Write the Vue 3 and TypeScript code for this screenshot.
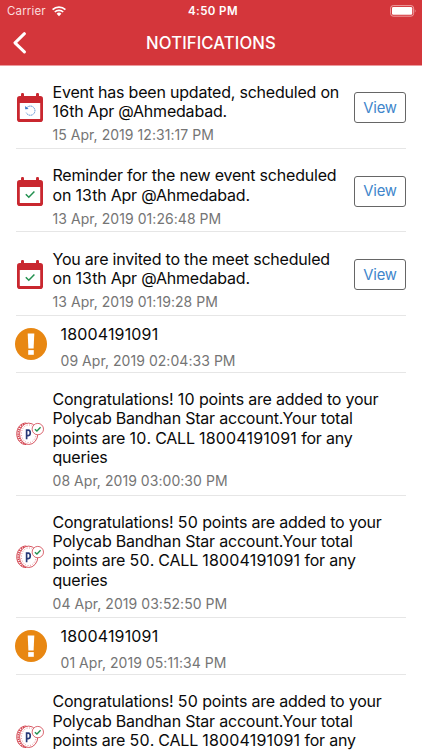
<script setup lang="ts">
type Kind = 'updated' | 'invite' | 'alert' | 'points'

interface Notice {
  kind: Kind
  lines: string[]
  date?: string
}

const pointsLines = (points: number): string[] => [
  `Congratulations! ${points} points are added to your`,
  'Polycab Bandhan Star account.Your total',
  `points are ${points}. CALL 18004191091 for any`,
  'queries',
]

const notices: Notice[] = [
  { kind: 'updated', lines: ['Event has been updated, scheduled on', '16th Apr @Ahmedabad.'], date: '15 Apr, 2019 12:31:17 PM' },
  { kind: 'invite', lines: ['Reminder for the new event scheduled', 'on 13th Apr @Ahmedabad.'], date: '13 Apr, 2019 01:26:48 PM' },
  { kind: 'invite', lines: ['You are invited to the meet scheduled', 'on 13th Apr @Ahmedabad.'], date: '13 Apr, 2019 01:19:28 PM' },
  { kind: 'alert', lines: ['18004191091'], date: '09 Apr, 2019 02:04:33 PM' },
  { kind: 'points', lines: pointsLines(10), date: '08 Apr, 2019 03:00:30 PM' },
  { kind: 'points', lines: pointsLines(50), date: '04 Apr, 2019 03:52:50 PM' },
  { kind: 'alert', lines: ['18004191091'], date: '01 Apr, 2019 05:11:34 PM' },
  { kind: 'points', lines: pointsLines(50).slice(0, 3) },
]

const isEvent = (kind: Kind): boolean => kind === 'updated' || kind === 'invite'

// Numbers are tracked wider than words, so each line is split around them.
const segments = (line: string): string[] => line.split(/(\d+)/).filter((part) => part !== '')
const isNumber = (part: string): boolean => /^\d+$/.test(part)
</script>

<template>
  <div class="screen">
    <header class="top">
      <div class="status">
        <div class="carrier">
          <span>Carrier</span>
          <svg class="wifi" viewBox="0 0 14 11">
            <path d="M0.6 3.7 A9.2 9.2 0 0 1 13.4 3.7" />
            <path d="M2.8 6 A6 6 0 0 1 11.2 6" />
            <path class="solid" d="M7 10.2 L4.6 7.8 A3.4 3.4 0 0 1 9.4 7.8 Z" />
          </svg>
        </div>
        <span class="clock">4:50 PM</span>
        <svg class="battery" viewBox="0 0 27 12">
          <rect x="0.6" y="0.6" width="23" height="10.6" rx="2.6" fill="none" stroke="#f0a9ac" stroke-width="0.9" />
          <rect x="2" y="2" width="20.2" height="7.8" rx="1.3" fill="#fff" />
          <path d="M24.8 4 Q26.4 5.9 24.8 7.8 Z" fill="#f0a9ac" />
        </svg>
      </div>
      <div class="nav">
        <svg class="back" viewBox="0 0 14 22"><path d="M11.4 1.7 L2 10.8 L11.4 19.9" /></svg>
        <h1>NOTIFICATIONS</h1>
      </div>
    </header>

    <main class="list">
      <article v-for="(notice, i) in notices" :key="i" class="row" :class="notice.kind">
        <div class="icon">
          <svg v-if="isEvent(notice.kind)" class="calendar" viewBox="0 0 26 29">
            <rect x="0" y="3" width="26" height="26" rx="2.8" fill="#c9272f" />
            <rect x="4" y="0" width="3" height="6" rx="1.2" fill="#c9272f" />
            <rect x="19" y="0" width="3" height="6" rx="1.2" fill="#c9272f" />
            <rect x="2.8" y="10" width="20.4" height="16" rx="0.6" fill="#fff" />
            <g v-if="notice.kind === 'updated'">
              <path d="M9.8 14.7 A4.6 4.6 0 1 1 9.2 19.7" fill="none" stroke="#5b92d2" stroke-width="1" stroke-dasharray="1.5 0.5" />
              <path d="M8.2 12.9 L8.2 16.2 L11.6 16 Z" fill="#3475c3" />
            </g>
            <path v-else d="M8.8 17.3 L11.8 20.3 L17.4 14.5" fill="none" stroke="#239150" stroke-width="1.5" />
          </svg>

          <svg v-else-if="notice.kind === 'alert'" class="warning" viewBox="0 0 32 32">
            <circle cx="16" cy="16" r="16" fill="#e88712" />
            <path d="M12.7 5.5 H19.3 L18.6 20.4 H13.4 Z" fill="#fff" />
            <rect x="13.2" y="22.1" width="5.6" height="4.7" fill="#fff" />
          </svg>

          <svg v-else class="coin" viewBox="0 0 29 24">
            <path d="M10.5 1 C4.5 1 0.8 6 0.8 12 S4.5 23 10.5 23" fill="none" stroke="#d2414d" stroke-width="1" />
            <path d="M10.5 2.2 C5.2 2.2 2.3 7 2.3 12 S5.2 21.8 10.5 21.8" fill="none" stroke="#d2414d" stroke-width="1.8" stroke-dasharray="1.3 1" />
            <ellipse cx="12.9" cy="12" rx="9.3" ry="10.9" fill="#fff" stroke="#d2414d" stroke-width="0.9" />
            <ellipse cx="12.9" cy="12" rx="7.4" ry="9" fill="none" stroke="#dc6f78" stroke-width="0.9" stroke-dasharray="0.9 1.7" />
            <path d="M10.8 17.6 V8.2 H12.6 Q14.5 8.2 14.5 11 Q14.5 13.8 12.6 13.8 H10.8" fill="none" stroke="#283a78" stroke-width="1.7" />
            <circle cx="22.2" cy="7.2" r="5.8" fill="#fff" stroke="#d55660" stroke-width="0.9" />
            <path d="M19.2 7.3 L21.3 9.2 L25 5.4" fill="none" stroke="#239150" stroke-width="1.4" />
          </svg>
        </div>

        <div class="body">
          <p class="message">
            <span v-for="(line, n) in notice.lines" :key="n" class="line"><span v-for="(part, k) in segments(line)" :key="k" :class="{ number: isNumber(part) }">{{ part }}</span></span>
          </p>
          <time v-if="notice.date" class="date">{{ notice.date }}</time>
        </div>
        <button v-if="isEvent(notice.kind)" class="view" type="button">View</button>
      </article>
    </main>
  </div>
</template>

<style>
html,
body {
  margin: 0;
  overflow: hidden;
}
</style>

<style scoped>
.screen {
  width: 422px;
  height: 750px;
  overflow: hidden;
  background: #fff;
  color: #0a0a0a;
  font-family: Inter, "Liberation Sans", sans-serif;
}

.top {
  height: 65px;
  background: #d4363b;
  border-bottom: 1px solid #eb9a9d;
  color: #fff;
}

.status {
  display: grid;
  grid-template-columns: 1fr auto 1fr;
  align-items: center;
  height: 22px;
  padding: 0 5px 0 7px;
  font-size: 11.5px;
}

.carrier {
  display: flex;
  align-items: center;
  gap: 6px;
  letter-spacing: 0.15px;
  color: #fbdcdd;
}

.wifi {
  width: 14px;
  height: 11px;
  fill: none;
  stroke: #fff;
  stroke-width: 1.7;
}

.wifi .solid {
  fill: #fff;
  stroke: none;
}

.clock {
  padding-left: 2px;
  font-weight: 600;
  letter-spacing: 0.4px;
}

.battery {
  justify-self: end;
  width: 27px;
  height: 12px;
}

.nav {
  display: grid;
  grid-template-columns: 40px 1fr 40px;
  align-items: center;
  height: 42px;
}

.back {
  width: 14px;
  height: 22px;
  margin-left: 13px;
  fill: none;
  stroke: #fff;
  stroke-width: 3;
  stroke-linecap: round;
  stroke-linejoin: round;
}

h1 {
  margin: 0;
  font-size: 16.7px;
  font-weight: 500;
  line-height: 20px;
  letter-spacing: 0.1px;
  text-align: center;
}

.list {
  margin-top: -0.7px;
  padding: 0 16px;
}

.row {
  display: flex;
  align-items: center;
  box-sizing: border-box;
  height: 83.5px;
  border-bottom: 1px solid #e6e6e6;
}

.row.updated,
.row.invite {
  padding-top: 2px;
}

.row.alert {
  height: 57px;
}

.row.points {
  height: 122.7px;
}

.icon {
  display: flex;
  flex: 0 0 36.5px;
}

.alert .icon {
  flex-basis: 45.5px;
  margin-left: -1px;
}

.calendar {
  width: 26px;
  height: 29px;
  margin-left: 1px;
}

.warning {
  width: 32px;
  height: 32px;
}

.coin {
  width: 28.5px;
  height: 23.6px;
}

.body {
  flex: 1;
  align-self: flex-start;
  min-width: 0;
  padding-top: 17px;
}

.updated .body,
.invite .body {
  padding-top: 15.3px;
}

.alert .body {
  padding-top: 9px;
}

.message {
  margin: 0;
  font-size: 16px;
  line-height: 19.4px;
  letter-spacing: -0.21px;
}

.number {
  letter-spacing: 0.16px;
}

.line {
  display: block;
  white-space: pre;
}

.date {
  display: block;
  margin-top: 4.7px;
  font-size: 14px;
  line-height: 18px;
  letter-spacing: 0.05px;
  color: #757575;
  white-space: nowrap;
}

.alert .date {
  margin-top: 7.3px;
}

.view {
  flex: none;
  width: 52px;
  height: 31px;
  padding: 0;
  border: 1px solid #666;
  border-radius: 3px;
  background: #fff;
  color: #4186cb;
  font: inherit;
  font-size: 14.8px;
  letter-spacing: -0.2px;
}

.row.points:last-child {
  border-bottom: 0;
}
</style>
